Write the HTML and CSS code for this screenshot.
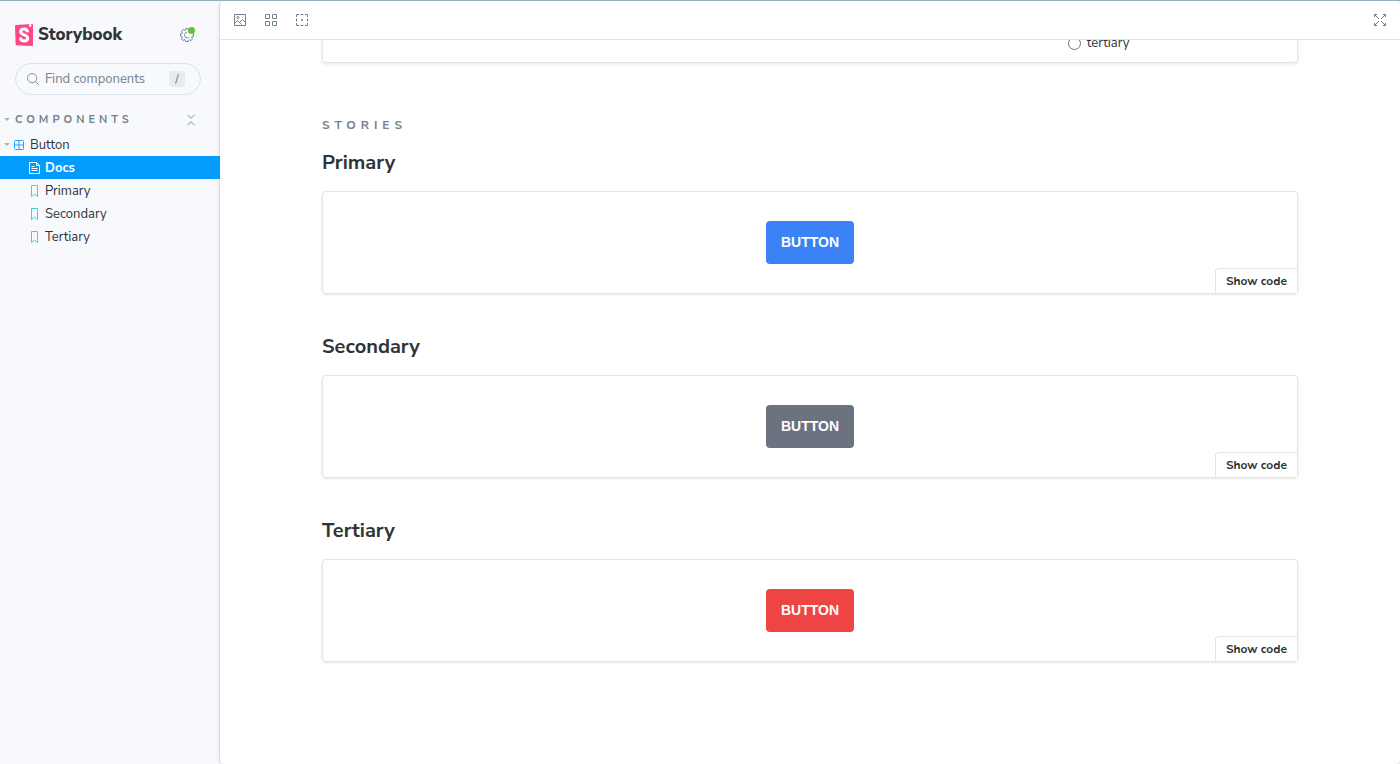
FILE: index.html
```html
<!DOCTYPE html>
<html lang="en">
<head>
    <meta charset="UTF-8">
    <meta name="viewport" content="width=device-width, initial-scale=1.0">
    <title>Button - Docs - Storybook</title>
    <link rel="stylesheet" href="styles.css">
</head>
<body>
    <aside class="sidebar">
        <header class="brand">
            <a class="logo" href="#">
                <svg width="18" height="22" viewBox="0 0 18 22" aria-hidden="true">
                    <path fill="#ff4785" d="M.6 20.3 0 2.2C0 1.5.4 1.1 1 1L16.700 0c.8 0 1.300.4 1.300 1.200V21c0 .6-.5 1-1.100 1L1.700 21.300c-.7 0-1.100-.4-1.100-1z"/>
                    <path fill="#fff" d="m14 .2 2.200-.2.100 3.200-.9-.7-1.100.8z"/>
                    <path class="logo-letter" d="M12.400 8.200C12.400 5.800 11.200 5 9.200 5 7 5 5.700 6.100 5.700 7.700c0 3.800 7 2.500 7 6.400 0 1.900-1.400 2.900-3.500 2.900-2.500 0-3.700-1.200-3.600-3.500"/>
                </svg>
                <span>Storybook</span>
            </a>
            <button class="icon-button settings" type="button" aria-label="Settings">
                <svg width="14" height="14" viewBox="0 0 14 14" aria-hidden="true">
                    <path d="M8.500 9.500A2.800 2.800 0 1 1 7 4.200"/>
                    <path d="M5.800.6h2.400l.4 1.500 1.100.4 1.300-.8 1.500 1.500-.8 1.400.5 1.100 1.300.3v2.200l-1.400.4-.4 1.200.8 1.200-1.600 1.600-1.300-.8-1 .4-.4 1.300H5.800l-.4-1.400-1.100-.4-1.200.8-1.600-1.600.7-1.300-.4-1.100L.5 8.100V5.900l1.400-.4.4-1.100-.7-1.300 1.600-1.500 1.200.7 1.100-.4z"/>
                </svg>
                <span class="status-dot"></span>
            </button>
        </header>

        <div class="search">
            <svg width="12" height="12" viewBox="0 0 14 14" aria-hidden="true"><circle cx="6" cy="6" r="5.400"/><path d="m10 10 3.600 3.600"/></svg>
            <input type="text" placeholder="Find components" aria-label="Find components">
            <kbd>/</kbd>
        </div>

        <nav class="explorer">
            <div class="explorer-heading">
                <button class="section-toggle" type="button"><span class="caret"></span>COMPONENTS</button>
                <button class="icon-button" type="button" aria-label="Collapse all">
                    <svg width="12" height="12" viewBox="0 0 14 14" aria-hidden="true"><path d="m3 1 4 4 4-4M3 13l4-4 4 4"/></svg>
                </button>
            </div>
            <a class="tree-item component" href="#">
                <span class="caret"></span>
                <svg class="component-icon" width="10" height="10" viewBox="0 0 10 10" aria-hidden="true"><rect x=".5" y=".5" width="9" height="9" rx="1"/><path d="M5 .5v9M.5 5h9"/></svg>
                Button
            </a>
            <a class="tree-item story selected" href="#">
                <svg class="docs-icon" width="11" height="12" viewBox="0 0 11 12" aria-hidden="true"><path d="M.5.5h7l3 3v8H.5zM7.500.5v3h3M2.500 4.500h3M2.500 6.500h6M2.500 8.500h6"/></svg>
                Docs
            </a>
            <a class="tree-item story" href="#">
                <svg class="story-icon" width="11" height="12" viewBox="0 0 11 12" aria-hidden="true"><path d="M2.500.5h6v11l-3-2.500-3 2.500z"/></svg>
                Primary
            </a>
            <a class="tree-item story" href="#">
                <svg class="story-icon" width="11" height="12" viewBox="0 0 11 12" aria-hidden="true"><path d="M2.500.5h6v11l-3-2.500-3 2.500z"/></svg>
                Secondary
            </a>
            <a class="tree-item story" href="#">
                <svg class="story-icon" width="11" height="12" viewBox="0 0 11 12" aria-hidden="true"><path d="M2.500.5h6v11l-3-2.500-3 2.500z"/></svg>
                Tertiary
            </a>
        </nav>
    </aside>

    <main class="main">
        <div class="toolbar">
            <button class="icon-button" type="button" aria-label="Change background">
                <svg width="12" height="12" viewBox="0 0 12 12" aria-hidden="true"><path d="M.5.5h11v11H.5zM.5 9.500l3-3 2 2 3-3 3 3M4.500 7.500l3 3"/><circle cx="4" cy="3.500" r="1"/></svg>
            </button>
            <button class="icon-button" type="button" aria-label="Apply a grid">
                <svg width="12" height="12" viewBox="0 0 12 12" aria-hidden="true"><path d="M.5.5h4v4h-4zM7.500.5h4v4h-4zM.5 7.500h4v4h-4zM7.500 7.500h4v4h-4z"/></svg>
            </button>
            <button class="icon-button" type="button" aria-label="Enable outlines">
                <svg width="12" height="12" viewBox="0 0 12 12" aria-hidden="true"><path d="M.5 3V.5H3M4.500.5h3M9 .5h2.500V3M11.500 4.500v3M11.500 9v2.500H9M7.500 11.500h-3M3 11.500H.5V9M.5 7.500v-3M5 6h2M6 5v2"/></svg>
            </button>
            <button class="icon-button fullscreen" type="button" aria-label="Go full screen">
                <svg width="12" height="12" viewBox="0 0 12 12" aria-hidden="true"><path d="M.5 3V.5H3M.5.5 5 5M9 .5h2.500V3M11.500.5 7 5M.5 9v2.500H3M.5 11.500 5 7M9 11.500h2.500V9M11.500 11.500 7 7"/></svg>
            </button>
        </div>

        <div class="canvas">
            <div class="docs">
                <div class="args-row">
                    <label class="radio-option"><input type="radio" name="variant">tertiary</label>
                </div>

                <h2 class="stories-title">STORIES</h2>

                <section class="story-block">
                    <h3>Primary</h3>
                    <div class="preview">
                        <button class="btn btn-primary" type="button">BUTTON</button>
                        <button class="show-code" type="button">Show code</button>
                    </div>
                </section>

                <section class="story-block">
                    <h3>Secondary</h3>
                    <div class="preview">
                        <button class="btn btn-secondary" type="button">BUTTON</button>
                        <button class="show-code" type="button">Show code</button>
                    </div>
                </section>

                <section class="story-block">
                    <h3>Tertiary</h3>
                    <div class="preview">
                        <button class="btn btn-tertiary" type="button">BUTTON</button>
                        <button class="show-code" type="button">Show code</button>
                    </div>
                </section>
            </div>
        </div>
    </main>
</body>
</html>
```
FILE: styles.css
```css
* {
    box-sizing: border-box;
}
body {
    display: flex;
    height: 100vh;
    margin: 0;
    border-top: 1px solid #8fb3b8;
    background: #f7f9fd;
    color: #2e3438;
    font-family: "Nunito Sans", Lato, sans-serif;
    font-size: 13px;
    overflow: hidden;
}
button,
input {
    font: inherit;
}
button {
    padding: 0;
    border: 0;
    background: none;
    color: inherit;
    cursor: pointer;
}
a {
    color: inherit;
    text-decoration: none;
}
svg {
    display: block;
    flex: none;
    fill: none;
    stroke: #73828c;
}
.logo svg {
    stroke: none;
}
.logo .logo-letter {
    stroke: #fff;
    stroke-width: 3;
}

/* Sidebar */
.sidebar {
    position: relative;
    z-index: 1;
    flex: none;
    width: 219px;
}
.brand {
    display: flex;
    align-items: center;
    justify-content: space-between;
    padding: 22px 25px 0 15px;
}
.logo {
    display: flex;
    align-items: center;
    gap: 5px;
    font-size: 17px;
    font-weight: 800;
    line-height: 23px;
}
.icon-button {
    display: flex;
}
.settings {
    position: relative;
}
.status-dot {
    position: absolute;
    top: -1px;
    right: -1px;
    width: 7px;
    height: 7px;
    border-radius: 50%;
    background: #66bf3c;
}
.search {
    display: flex;
    align-items: center;
    gap: 6px;
    height: 32px;
    margin: 17px 18px 0 15px;
    padding: 0 15px 0 11px;
    border: 1px solid #d9e3e8;
    border-radius: 16px;
}
.search input {
    flex: 1;
    min-width: 0;
    padding: 0;
    border: 0;
    outline: 0;
    background: none;
}
.search input::placeholder {
    color: #73828c;
    opacity: 1;
}
.search kbd {
    width: 16px;
    border-radius: 3px;
    background: #e9ecef;
    color: #5c6870;
    font-family: inherit;
    font-size: 12px;
    line-height: 16px;
    text-align: center;
}
.explorer-heading {
    display: flex;
    align-items: center;
    justify-content: space-between;
    height: 27px;
    margin-top: 11px;
    padding: 0 22px 0 4px;
}
.section-toggle {
    display: flex;
    align-items: center;
    gap: 5px;
    color: #73828c;
    font-size: 11px;
    font-weight: 700;
    letter-spacing: 4px;
}
.caret {
    border: 3px solid transparent;
    border-top-color: #a9b4ba;
    border-bottom: 0;
}
.tree-item {
    display: flex;
    align-items: center;
    width: 220px;
    height: 23px;
}
.component {
    gap: 4px;
    padding-left: 4px;
}
.component svg {
    margin-right: 2px;
}
.story {
    gap: 5px;
    padding-left: 29px;
}
.selected {
    background: #029cfd;
    color: #fff;
    font-weight: 700;
}
.component-icon {
    stroke: #1ea7fd;
}
.docs-icon {
    stroke: #fff;
}
.story-icon {
    stroke: #37d5d3;
}

/* Main area */
.main {
    display: flex;
    flex: 1;
    flex-direction: column;
    min-width: 0;
    border-left: 1px solid #d9dde1;
    border-radius: 5px;
    background: #fff;
    box-shadow: 0 1px 4px rgba(0, 0, 0, 0.1);
}
.toolbar {
    display: flex;
    flex: none;
    align-items: center;
    gap: 19px;
    height: 39px;
    padding: 0 14px;
    border-bottom: 1px solid #dde4e8;
}
.fullscreen {
    margin-left: auto;
}
.canvas {
    flex: 1;
    min-height: 0;
    padding: 0 20px;
    overflow: hidden;
}
.docs {
    max-width: 976px;
    margin: -7px auto 0;
}
.args-row {
    display: grid;
    grid-template-columns: 13fr 4fr;
    height: 30px;
    border: 1px solid #dfe5ea;
    border-top: 0;
    border-radius: 0 0 4px 4px;
    box-shadow: 0 1px 4px rgba(0, 0, 0, 0.1);
}
.radio-option {
    display: flex;
    grid-column: 2;
    align-items: center;
    gap: 6px;
    height: 20px;
}
.radio-option input {
    width: 13px;
    height: 13px;
    margin: 0;
}
.stories-title {
    margin: 52px 0 16px;
    color: #73828c;
    font-size: 12px;
    font-weight: 700;
    line-height: 20px;
    letter-spacing: 5px;
}
.story-block {
    margin-bottom: 41px;
}
.story-block h3 {
    margin: 0 0 16px;
    font-size: 20px;
    font-weight: 700;
    line-height: 24px;
}
.preview {
    position: relative;
    display: flex;
    justify-content: center;
    padding: 29px;
    border: 1px solid #dfe5ea;
    border-radius: 4px;
    box-shadow: 0 1px 3px rgba(0, 0, 0, 0.1);
}
.btn {
    padding: 0 15px;
    border-radius: 4px;
    color: #fff;
    font-family: "Liberation Sans", sans-serif;
    font-size: 14px;
    font-weight: 700;
    line-height: 43px;
}
.btn-primary {
    background: #3b82f6;
}
.btn-secondary {
    background: #6b7280;
}
.btn-tertiary {
    background: #ef4444;
}
.show-code {
    position: absolute;
    right: 0;
    bottom: 0;
    padding: 0 10px;
    border: 1px solid #dfe5ea;
    border-width: 1px 0 0 1px;
    border-radius: 4px 0 0 0;
    background: #fff;
    font-size: 12px;
    font-weight: 700;
    line-height: 24px;
}
```
